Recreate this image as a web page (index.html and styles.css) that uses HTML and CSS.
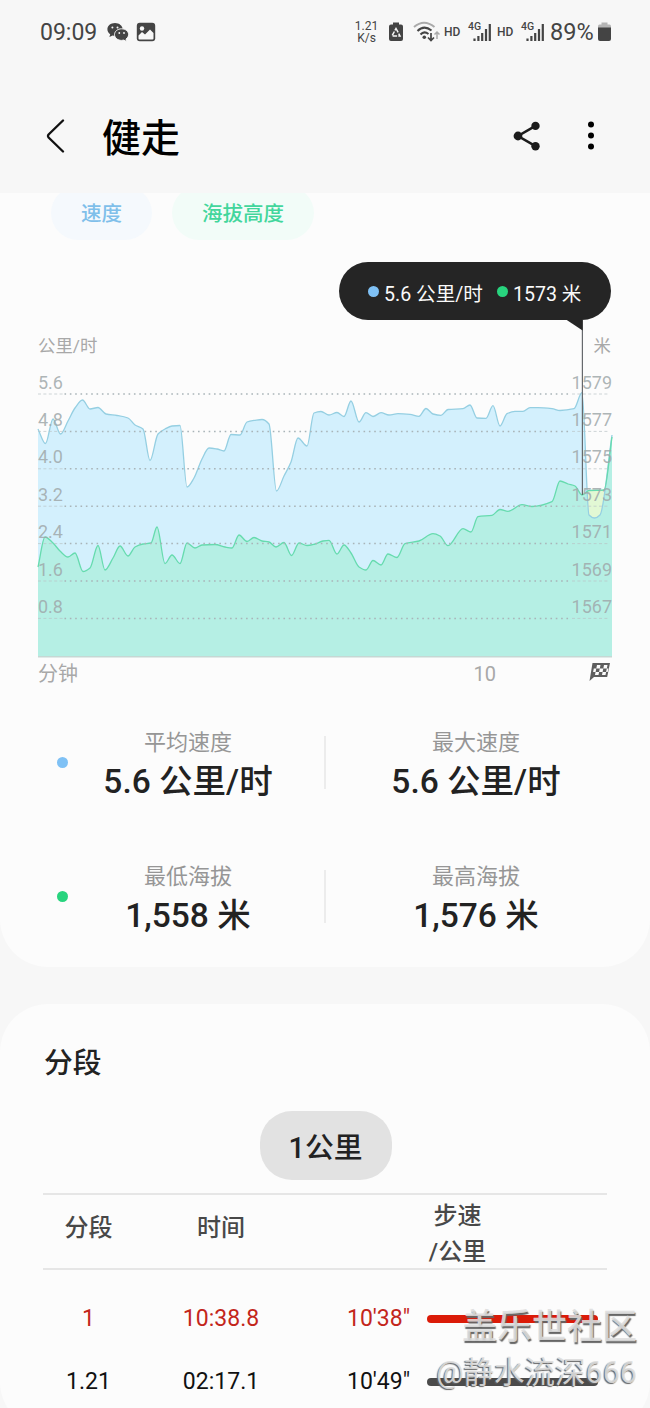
FILE: index.html
```html
<!DOCTYPE html>
<html lang="zh-CN">
<head>
  <meta charset="UTF-8">
  <meta name="viewport" content="width=device-width, initial-scale=1.0">
  <title>健走</title>
  <link rel="stylesheet" href="styles.css">
</head>
<body>
<div class="screen">
  <header class="header">
    <div class="status-bar">
      <span class="clock">09:09</span>
      <svg class="icon-wechat" width="22" height="20" viewBox="0 0 22 20">
        <path fill="#444" d="M8 1C3.600 1 .4 3.800.4 7.300c0 2 1 3.700 2.800 4.900L2.400 15l3.200-1.600c.8.200 1.600.3 2.400.3 4.300 0 7.700-2.800 7.700-6.300S12.300 1 8 1z"/>
        <path fill="#444" stroke="#f7f7f7" d="M14.600 6.800c-4 0-7.100 2.600-7.100 5.800s3.100 5.800 7.100 5.800c.8 0 1.500-.1 2.200-.3l2.900 1.500-.7-2.500c1.600-1.100 2.600-2.700 2.600-4.500 0-3.200-3-5.800-7-5.800z"/>
        <g fill="#f7f7f7"><circle cx="5.400" cy="5.400" r="1"/><circle cx="10.500" cy="5.400" r="1"/><circle cx="12.300" cy="11" r=".9"/><circle cx="17" cy="11" r=".9"/></g>
      </svg>
      <svg class="icon-image" width="20" height="20" viewBox="0 0 20 20">
        <rect x=".8" y=".8" width="18.400" height="18.400" rx="3" fill="#444"/>
        <circle cx="6" cy="6.500" r="2.200" fill="#f7f7f7"/>
        <path fill="#f7f7f7" d="M2.500 13.500l3.500-3.500 3 2.600 5-5 3.500 3.500v5.400q0 1-1 1h-13q-1 0-1-1z"/>
      </svg>
      <div class="net-speed"><div>1.21</div><div>K/s</div></div>
      <svg class="icon-saver" width="14" height="20" viewBox="0 0 14 20">
        <path fill="#444" d="M4 .5h6v2h2q2 0 2 2v12.500q0 2-2 2H2q-2 0-2-2V4.500q0-2 2-2h2z"/>
        <path fill="none" stroke="#f7f7f7" stroke-width="1.500" stroke-dasharray="4.500 1.200" d="M7 6.500l4 7.500H3z"/>
      </svg>
      <svg class="icon-wifi" width="28" height="22" viewBox="0 0 28 22">
        <g fill="none" stroke-width="2">
          <path stroke="#aaa" d="M1 6Q11-2.500 21.500 6"/>
          <path stroke="#444" d="M4.500 10Q11 3.500 18.500 9.500M7.500 13.500Q11 9.500 15.500 13"/>
          <path stroke="#444" stroke-width="1.700" d="M18 12v7.500M15 16.500l3 3 3-3"/>
          <path stroke="#aaa" stroke-width="1.500" d="M24 18v-7M21.500 13.500l2.500-2.500 2.500 2.500"/>
        </g>
        <circle cx="11.300" cy="16.300" r="1.800" fill="#444"/>
      </svg>
      <span class="hd">HD</span>
      <svg class="icon-signal" width="24" height="22" viewBox="0 0 24 22">
        <text x="0" y="8.500">4G</text>
        <path stroke="#444" stroke-width="2.200" d="M6.500 20v-2.500M10.400 20v-5M14.200 20v-8M18 20V8M21.800 20V3"/>
      </svg>
      <span class="hd">HD</span>
      <svg class="icon-signal" width="24" height="22" viewBox="0 0 24 22">
        <text x="0" y="8.500">4G</text>
        <path stroke="#444" stroke-width="2.200" d="M6.500 20v-2.500M10.400 20v-5M14.200 20v-8M18 20V8M21.800 20V3"/>
      </svg>
      <span class="battery-text">89%</span>
      <svg class="icon-battery" width="13" height="20" viewBox="0 0 13 20">
        <path fill="#b5b5b5" d="M3.500 .5h6v2h2q1.500 0 1.500 2V6H0V4.500q0-2 1.500-2h2z"/>
        <path fill="#444" d="M0 5.500h13V17q0 2-2 2H2q-2 0-2-2z"/>
      </svg>
    </div>

    <div class="title-bar">
      <svg width="20" height="36" viewBox="0 0 20 36">
        <path d="M17 2.500L2.600 16.500q-1.200 1.500 0 3L17 33.500" fill="none" stroke="#111" stroke-width="2.300" stroke-linecap="round"/>
      </svg>
      <h1>健走</h1>
      <svg class="icon-share" width="28" height="30" viewBox="0 0 28 30">
        <path d="M22.500 4.800L5 15l17.500 10.200" fill="none" stroke="#1c1c1c" stroke-width="2.500"/>
        <g fill="#1c1c1c"><circle cx="22.500" cy="4.900" r="4.200"/><circle cx="5" cy="15" r="4.400"/><circle cx="22.500" cy="25.200" r="4.200"/></g>
      </svg>
      <svg width="8" height="30" viewBox="0 0 8 30">
        <g fill="#000"><circle cx="4" cy="3.500" r="3"/><circle cx="4" cy="14.500" r="3"/><circle cx="4" cy="25.500" r="3"/></g>
      </svg>
    </div>
  </header>

  <main>
    <section class="card chart-card">
      <div class="tabs">
        <span class="tab speed">速度</span>
        <span class="tab altitude">海拔高度</span>
      </div>

      <div class="tooltip">
        <i class="dot blue"></i><span>5.6 公里/时</span>
        <i class="dot green"></i><span>1573 米</span>
      </div>

      <svg class="chart" id="chart" width="650" height="370" viewBox="0 320 650 370">
        <defs><clipPath id="speedClip"><path class="speed-shape"/></clipPath></defs>
        <path class="altitude-shape" fill="#e2f8d4"/>
        <path class="speed-shape" fill="#d3f0fd"/>
        <path class="altitude-shape" fill="#b5efe4" clip-path="url(#speedClip)"/>
        <path id="speedLine" fill="none" stroke="#95cfe2" stroke-width="1.300"/>
        <path id="altitudeLine" fill="none" stroke="#66dbae" stroke-width="1.300"/>
        <g id="grid"></g>
        <path d="M38 656.700H612" stroke="#c5d8d4" stroke-width="1.500"/>
        <path d="M582.400 320V495" stroke="#66696d" stroke-width="1.200"/>
        <path d="M566 319.500h16.600v11z" fill="#252525"/>
        <text class="unit" x="38" y="351.500">公里/时</text>
        <text class="unit" x="611" y="351.500" text-anchor="end">米</text>
        <text class="axis" x="38" y="681">分钟</text>
        <text class="axis" x="473.500" y="680.500">10</text>
        <g transform="translate(589 662)">
          <path d="M3.500 1H21l-2.800 14H5L.5 19z" fill="#5e5e5e"/>
          <g fill="#fcfcfc"><path d="M8 3h3.500l-.7 3.500H7.300zM15 3h3.500l-.7 3.500h-3.500zM10.800 6.500h3.500l-.7 3.500h-3.500zM6.600 10h3.500l-.6 3H6zM13.600 10h3.500l-.6 3H13zM4.800 6.500h2.500L6.600 10H4.100zM17.800 6.500h1.600l-.7 3.500h-1.600z"/></g>
        </g>
      </svg>

      <div class="stats">
        <i class="dot blue"></i>
        <div class="stat"><span>平均速度</span><strong>5.6 公里/时</strong></div>
        <i class="divider"></i>
        <div class="stat"><span>最大速度</span><strong>5.6 公里/时</strong></div>
      </div>
      <div class="stats">
        <i class="dot green"></i>
        <div class="stat"><span>最低海拔</span><strong>1,558 米</strong></div>
        <i class="divider"></i>
        <div class="stat"><span>最高海拔</span><strong>1,576 米</strong></div>
      </div>
    </section>

    <section class="card splits-card">
      <h2>分段</h2>
      <div class="distance">1公里</div>
      <div class="row head">
        <span>分段</span><span>时间</span><span class="pace-title">步速<br>/公里</span>
      </div>
      <div class="row best">
        <span>1</span><span>10:38.8</span>
        <div class="pace"><span>10'38"</span><i class="bar"></i></div>
      </div>
      <div class="row">
        <span>1.21</span><span>02:17.1</span>
        <div class="pace"><span>10'49"</span><i class="bar"></i></div>
      </div>
    </section>
  </main>

  <div class="watermark">
    <div class="community">盖乐世社区</div>
    <div class="user">@静水流深666</div>
  </div>
</div>
<script src="chart.js"></script>
</body>
</html>
```
FILE: styles.css
```css
* {
  box-sizing: border-box;
}

body {
  margin: 0;
  background: #f7f7f7;
  color: #222;
  font-family: Roboto, "Noto Sans CJK SC", sans-serif;
}

.screen {
  position: relative;
  height: 1408px;
  overflow: hidden;
}

svg {
  display: block;
  flex: none;
}

h1, h2 {
  margin: 0;
  font-weight: 500;
}

/* header */
.header {
  position: relative;
  z-index: 1;
  height: 193px;
  background: #f7f7f7;
}

.status-bar {
  display: flex;
  align-items: center;
  height: 63px;
  padding: 0 39px 0 40px;
  color: #444;
  white-space: nowrap;
}

.clock {
  width: 67px;
  padding-top: 1px;
  font-size: 23px;
}

.icon-image {
  margin-left: 7px;
}

.net-speed {
  width: 27px;
  margin: 0 9px 0 auto;
  font-size: 12px;
  line-height: 12px;
  text-align: center;
}

.icon-wifi {
  margin: 0 3px 0 10px;
}

.hd {
  width: 24px;
  font-size: 12px;
  font-weight: 500;
}

.icon-signal {
  margin-right: 5px;
  overflow: visible;
}

.icon-signal text {
  font-size: 10.5px;
  font-weight: 500;
  fill: #444;
}

.battery-text {
  width: 48px;
  padding-top: 1px;
  font-size: 23.5px;
}

.title-bar {
  display: flex;
  align-items: center;
  height: 145px;
  padding: 0 55px 0 46px;
}

.title-bar h1 {
  margin: 6px 0 0 36px;
  font-size: 39px;
  line-height: 50px;
  color: #000;
}

.icon-share {
  margin: 0 46px 0 auto;
}

/* cards */
.card {
  background: #fcfcfc;
}

.chart-card {
  height: 774px;
  border-radius: 0 0 48px 48px;
}

.tabs {
  display: flex;
  gap: 20px;
  height: 69px;
  padding-left: 51px;
}

.tab {
  height: 54px;
  margin-top: -7px;
  padding: 0 30px;
  border-radius: 27px;
  font-size: 20.5px;
  font-weight: 500;
  line-height: 56px;
}

.tab.speed {
  color: #7fbfea;
  background: #f5f9fd;
}

.tab.altitude {
  color: #42d69c;
  background: #f2fcf8;
}

.tooltip {
  display: flex;
  align-items: center;
  width: 272px;
  height: 58px;
  margin-left: 339px;
  padding-left: 29px;
  border-radius: 29px;
  background: #252525;
  color: #fafafa;
  font-size: 19.6px;
  white-space: nowrap;
}

.tooltip span {
  margin: 2px 14px 0 5px;
}

.dot {
  flex: none;
  width: 11px;
  height: 11px;
  border-radius: 50%;
}

.dot.blue {
  background: #7fc1f5;
}

.dot.green {
  background: #28d47e;
}

.unit {
  font-size: 17.4px;
  fill: #a8a8a8;
}

.label {
  font-size: 18px;
  fill: #9fa8aa;
  fill-opacity: 0.85;
}

.axis {
  font-size: 20px;
  fill: #a8a8a8;
}

.stats {
  display: grid;
  grid-template-columns: 52px 272px 2px 300px;
  align-items: center;
  height: 134px;
  padding-top: 10px;
}

.stats .dot {
  margin-left: 57px;
}

.stat {
  display: flex;
  flex-direction: column;
  align-items: center;
  height: 72px;
}

.stat span {
  font-size: 22px;
  line-height: 34px;
  color: #969696;
}

.stat strong {
  font-size: 33.5px;
  font-weight: 500;
  line-height: 44px;
  white-space: nowrap;
}

.divider {
  height: 53px;
  border-left: 2px solid #ececec;
}

/* splits */
.splits-card {
  height: 426px;
  margin-top: 37px;
  padding: 38px 43px 0 44px;
  border-radius: 48px;
}

.splits-card h2 {
  font-size: 28.8px;
  line-height: 42px;
}

.distance {
  width: 132px;
  height: 69px;
  margin: 27px auto 13px;
  border-radius: 32px;
  background: #e2e2e2;
  font-size: 28.8px;
  font-weight: 500;
  line-height: 75px;
  text-align: center;
}

.row {
  display: grid;
  grid-template-columns: 91px 174px 1fr;
  align-items: center;
  height: 63px;
  margin-left: -1px;
  color: #111;
  font-size: 23px;
  text-align: center;
}

.row.head {
  height: 77px;
  margin-bottom: 17px;
  border: solid #e6e6e6;
  border-width: 2px 0;
  color: #484848;
  font-size: 24px;
  font-weight: 500;
  line-height: 36px;
}

.row.head span {
  padding-bottom: 10px;
}

.row.head .pace-title {
  padding: 3px 0 0;
}

.row.best {
  color: #c3261b;
}

.pace {
  display: flex;
  align-items: center;
  padding-left: 39px;
}

.pace span {
  width: 80px;
  text-align: left;
}

.bar {
  width: 171px;
  height: 8px;
  border-radius: 4px;
  background: #4b4b4b;
}

.best .bar {
  background: #db1b08;
}

.watermark {
  position: absolute;
  right: 13px;
  bottom: 13px;
  color: rgba(222, 222, 222, 0.9);
  text-align: right;
  text-shadow: 1px 2px 1px #666;
  white-space: nowrap;
}

.community {
  font-size: 35px;
  font-weight: 500;
  line-height: 46px;
}

.user {
  font-size: 30.5px;
  line-height: 44px;
  text-shadow: -1px 1px 1px #666;
}
```
FILE: chart.js
```js
const speed = [
  [38,429],[45.5,443.5],[53,419],[60.5,434],[68,421],[75,408],[82.5,400],[90,409],[98,407.5],[106,414],[117,415.5],[128,418],
  [135,425],[143,429],[150,460.5],[158,434],[165,429],[172,426],[180,425.5],[187,487],[194,478],[202,459],[209,448],[217,449],
  [224,451],[231,434.5],[240,435],[247,422],[255,420.3],[262,419.5],[269,424],[276.5,491],[284,476],[291,462],[298,438],[307,446],
  [314,413],[321,411.5],[329,415],[337,412.5],[344,416.5],[351,401],[359,422],[366,412.7],[373,416.5],[381,412.7],[389,415],
  [398,413.7],[410,414.3],[419,416.3],[426,408.5],[433,414],[441,415.3],[448,409.5],[463,408.7],[470,405],[477,418],[486,418.3],
  [493,405.7],[500,426],[507,413.7],[515,411.3],[523,411.3],[530,407.7],[538,407.7],[552,408.7],[560,410.5],[574,408.7],
  [582,392.7],[589,515],[594.5,518],[600,515],[612,435]
];

const altitude = [
  [38,567],[45,537],[53,543],[60,551],[68,557],[75,553],[83,571.5],[90,568],[98,545.5],[105,570],[113,558],[120,546],[128,556],
  [135,547],[143,544],[151,543],[157,527],[165,563.5],[172,555],[180,563.5],[187,543],[195,548],[202,545],[215,544.5],[225,547],
  [232,548],[239,535],[247,541.5],[254,537.5],[262,541],[269,542],[276,547],[284,542.5],[291.5,555.5],[299,543],[307,545.5],
  [315,544],[323,541],[329,540.3],[337,554],[344,545],[351,553],[359,567],[366,570],[373,560.5],[381,565],[388,554],[397,557.5],
  [405,543.7],[419,541],[433,533.7],[440,536],[448,545.7],[463,528.7],[471,532],[478,516.7],[492,515.3],[500,509.5],[508,511.3],
  [522,504.7],[532,506.5],[552,501.7],[560,481],[568,484],[575,486],[582,495],[589,490.5],[604,490],[612,437]
];

// monotone curve through the points
function curve(points) {
  const slope = (a, b) => (b[1] - a[1]) / (b[0] - a[0]);
  const tangents = points.map((p, i) => {
    if (i === 0) return slope(p, points[1]);
    if (i === points.length - 1) return slope(points[i - 1], p);
    const left = slope(points[i - 1], p);
    const right = slope(p, points[i + 1]);
    return left * right <= 0 ? 0 : 2 * left * right / (left + right);
  });
  let d = `M${points[0]}`;
  for (let i = 1; i < points.length; i++) {
    const a = points[i - 1];
    const b = points[i];
    const h = (b[0] - a[0]) / 3;
    d += `C${a[0] + h},${a[1] + h * tangents[i - 1]} ${b[0] - h},${b[1] - h * tangents[i]} ${b}`;
  }
  return d;
}

function drawSeries(name, points) {
  const d = curve(points);
  document.getElementById(name + "Line").setAttribute("d", d);
  document.querySelectorAll(`.${name}-shape`).forEach((path) => {
    path.setAttribute("d", d + "V656H38Z");
  });
}

function drawGrid() {
  let html = "";
  for (let i = 0; i < 7; i++) {
    const y = 394 + i * 37.4;
    html += `<path d="M38 ${y}H64M572 ${y}H608" stroke="#b9c3c6" stroke-opacity=".7" stroke-dasharray="3 2.4"/>`;
    html += `<path d="M64.500 ${y}H571" stroke="#a9b4b8" stroke-width="1.500" stroke-dasharray="1.600 3.740"/>`;
    html += `<text class="label" x="38" y="${y - 5.5}">${(5.6 - i * 0.8).toFixed(1)}</text>`;
    html += `<text class="label" x="612" y="${y - 5.5}" text-anchor="end">${1579 - i * 2}</text>`;
  }
  document.getElementById("grid").innerHTML = html;
}

drawSeries("speed", speed);
drawSeries("altitude", altitude);
drawGrid();
```
